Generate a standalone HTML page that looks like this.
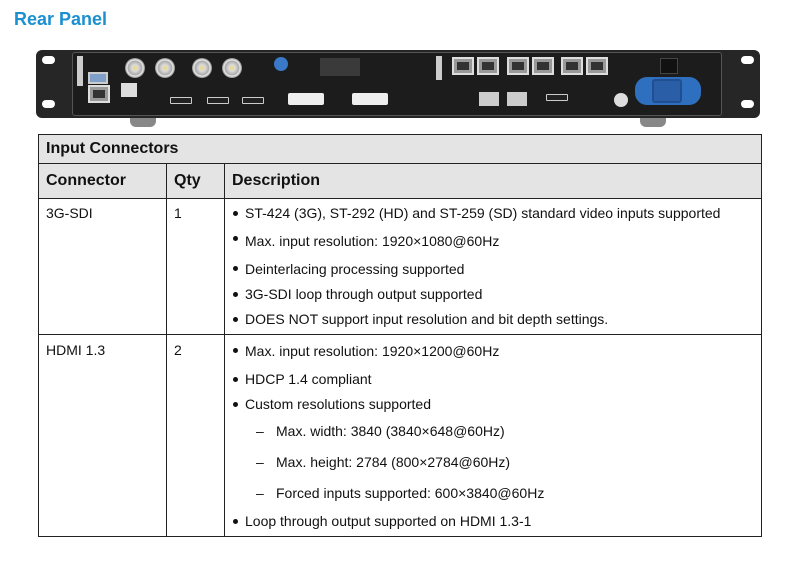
<!DOCTYPE html>
<html><head><meta charset="utf-8"><style>
*{margin:0;padding:0;box-sizing:border-box}
body{width:790px;height:566px;background:#fff;font-family:"Liberation Sans",sans-serif;position:relative;overflow:hidden}
.t{position:absolute;left:14px;top:9px;font-size:18px;font-weight:bold;color:#1b8fd0}
.a{position:absolute}
.bnc{position:absolute;width:20px;height:20px;border-radius:50%;background:radial-gradient(circle,#e8d9a0 0 2px,#ddd 3px,#aaa 7px,#eee 8px,#888 10px)}
.rj{position:absolute;width:22px;height:18px;background:#999;border:2px solid #ddd}
.rj i{position:absolute;left:3px;top:3px;width:12px;height:8px;background:#333}
.hd{position:absolute;width:22px;height:7px;background:#222;border:1.5px solid #ccc;border-radius:1px}
.g{position:absolute;background:#3a3a3a}
table{position:absolute;left:38px;top:134px;width:724px;border-collapse:collapse;font-size:14px;color:#111}
td{border:1px solid #222;vertical-align:top;padding:0 7px}
.h td{background:#e4e4e4;font-weight:bold;font-size:16px;height:29px;vertical-align:middle}
ul{list-style:none}
li{position:relative;padding-left:13px;height:25px;line-height:25px}
li:before{content:"";position:absolute;left:1px;top:10px;width:5px;height:5px;border-radius:50%;background:#111}
li.d{padding-left:44px;height:31px;line-height:31px}
li.d:before{content:"–";width:auto;height:auto;background:none;border-radius:0;left:24px;top:0}
</style></head><body>
<div class="t">Rear Panel</div>
<div class="a" style="left:36px;top:50px;width:724px;height:68px;background:#262626;border-radius:6px"></div>
<div class="a" style="left:42px;top:56px;width:13px;height:8px;background:#fff;border-radius:4px"></div>
<div class="a" style="left:42px;top:100px;width:13px;height:8px;background:#fff;border-radius:4px"></div>
<div class="a" style="left:741px;top:56px;width:13px;height:8px;background:#fff;border-radius:4px"></div>
<div class="a" style="left:741px;top:100px;width:13px;height:8px;background:#fff;border-radius:4px"></div>
<div class="a" style="left:72px;top:52px;width:650px;height:64px;background:#1c1c1c;border:1px solid #555;border-radius:3px"></div>
<div class="a" style="left:130px;top:118px;width:26px;height:9px;background:#888;border-radius:0 0 6px 6px"></div>
<div class="a" style="left:640px;top:118px;width:26px;height:9px;background:#888;border-radius:0 0 6px 6px"></div>
<div class="a" style="left:77px;top:56px;width:6px;height:30px;background:#ccc"></div>
<div class="a" style="left:88px;top:72px;width:20px;height:12px;background:#7fa0c8;border:2px solid #ccc"></div>
<div class="rj" style="left:88px;top:85px"><i></i></div>
<div class="a" style="left:121px;top:83px;width:16px;height:14px;background:#ddd"></div>
<div class="bnc" style="left:125px;top:58px"></div><div class="bnc" style="left:155px;top:58px"></div>
<div class="bnc" style="left:192px;top:58px"></div><div class="bnc" style="left:222px;top:58px"></div>
<div class="a" style="left:274px;top:57px;width:14px;height:14px;border-radius:50%;background:#3a78c8"></div>
<div class="hd" style="left:170px;top:97px"></div><div class="hd" style="left:207px;top:97px"></div><div class="hd" style="left:242px;top:97px"></div>
<div class="a" style="left:288px;top:93px;width:36px;height:12px;background:#eee;border-radius:2px"></div>
<div class="a" style="left:352px;top:93px;width:36px;height:12px;background:#eee;border-radius:2px"></div>
<div class="g" style="left:320px;top:58px;width:40px;height:18px"></div>
<div class="a" style="left:436px;top:56px;width:6px;height:24px;background:#ccc"></div>
<div class="rj" style="left:452px;top:57px"><i></i></div><div class="rj" style="left:477px;top:57px"><i></i></div>
<div class="rj" style="left:507px;top:57px"><i></i></div><div class="rj" style="left:532px;top:57px"><i></i></div>
<div class="rj" style="left:561px;top:57px"><i></i></div><div class="rj" style="left:586px;top:57px"><i></i></div>
<div class="a" style="left:479px;top:92px;width:20px;height:14px;background:#ccc"></div>
<div class="a" style="left:507px;top:92px;width:20px;height:14px;background:#ccc"></div>
<div class="hd" style="left:546px;top:94px"></div>
<div class="a" style="left:614px;top:93px;width:14px;height:14px;border-radius:50%;background:#ddd"></div>
<div class="a" style="left:660px;top:58px;width:18px;height:16px;background:#111;border:1px solid #444"></div>
<div class="a" style="left:635px;top:77px;width:66px;height:28px;background:#2f6fbf;border-radius:12px"></div>
<div class="a" style="left:652px;top:79px;width:30px;height:24px;background:#2a5fa8;border:2px solid #1f4f90;border-radius:3px"></div>
<table>
<tr class="h"><td colspan="3">Input Connectors</td></tr>
<tr class="h" style="height:35px"><td style="width:128px">Connector</td><td style="width:58px">Qty</td><td>Description</td></tr>
<tr style="height:136px"><td style="padding-top:6px">3G-SDI</td><td style="padding-top:6px">1</td><td style="padding-top:2px"><ul>
<li>ST-424 (3G), ST-292 (HD) and ST-259 (SD) standard video inputs supported</li>
<li style="height:30px;line-height:30px">Max. input resolution: 1920×1080@60Hz</li>
<li style="height:26px;line-height:26px">Deinterlacing processing supported</li>
<li>3G-SDI loop through output supported</li>
<li>DOES NOT support input resolution and bit depth settings.</li></ul></td></tr>
<tr style="height:202px"><td style="padding-top:7px">HDMI 1.3</td><td style="padding-top:7px">2</td><td style="padding-top:3px"><ul>
<li style="height:29px;line-height:27px">Max. input resolution: 1920×1200@60Hz</li>
<li>HDCP 1.4 compliant</li>
<li style="height:24px">Custom resolutions supported</li>
<li class="d">Max. width: 3840 (3840×648@60Hz)</li>
<li class="d">Max. height: 2784 (800×2784@60Hz)</li>
<li class="d">Forced inputs supported: 600×3840@60Hz</li>
<li>Loop through output supported on HDMI 1.3-1</li></ul></td></tr>
</table>
</body></html>
